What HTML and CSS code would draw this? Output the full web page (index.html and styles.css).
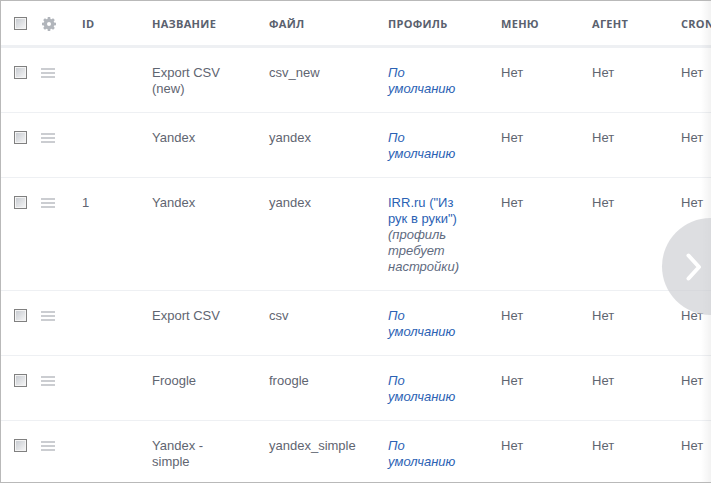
FILE: index.html
```html
<!DOCTYPE html>
<html lang="ru">
<head>
<meta charset="utf-8">
<title>Экспорт</title>
<link rel="stylesheet" href="styles.css">
</head>
<body>
<div class="frame">
<table class="grid">
<colgroup>
<col class="c-check"><col class="c-handle"><col class="c-id"><col class="c-name"><col class="c-file"><col class="c-profile"><col class="c-menu"><col class="c-agent"><col class="c-cron">
</colgroup>
<thead>
<tr>
<th><span class="check"></span></th>
<th><svg class="gear" viewBox="0 0 14 14" width="14" height="14"><path fill-rule="evenodd" d="M5.800 0h2.400l.3 1.900 1 .4L11.100 1.200l1.700 1.700-1.100 1.600.4 1L14 5.800v2.400l-1.900.3-.4 1 1.100 1.600-1.700 1.700-1.600-1.100-1 .4-.3 1.900H5.800l-.3-1.900-1-.4-1.600 1.100-1.700-1.700 1.100-1.600-.4-1L0 8.200V5.800l1.900-.3.4-1L1.200 2.900l1.700-1.700 1.600 1.100 1-.4zM7 5a2 2 0 1 0 0 4 2 2 0 0 0 0-4z"/></svg></th>
<th>ID</th><th>Название</th><th>Файл</th><th>Профиль</th><th>Меню</th><th>Агент</th><th>Cron</th>
</tr>
</thead>
<tbody>
<tr>
<td><span class="check"></span></td><td><span class="handle"></span></td><td></td>
<td class="wrap">Export CSV (new)</td><td>csv_new</td>
<td class="profile"><a class="link"><em>По умолчанию</em></a></td><td>Нет</td><td>Нет</td><td>Нет</td>
</tr>
<tr>
<td><span class="check"></span></td><td><span class="handle"></span></td><td></td>
<td class="wrap">Yandex</td><td>yandex</td>
<td class="profile"><a class="link"><em>По умолчанию</em></a></td><td>Нет</td><td>Нет</td><td>Нет</td>
</tr>
<tr>
<td><span class="check"></span></td><td><span class="handle"></span></td><td>1</td>
<td class="wrap">Yandex</td><td>yandex</td>
<td class="profile"><a class="link">IRR.ru ("Из рук в руки")</a> <em class="note">(профиль требует настройки)</em></td><td>Нет</td><td>Нет</td><td>Нет</td>
</tr>
<tr>
<td><span class="check"></span></td><td><span class="handle"></span></td><td></td>
<td class="wrap">Export CSV</td><td>csv</td>
<td class="profile"><a class="link"><em>По умолчанию</em></a></td><td>Нет</td><td>Нет</td><td>Нет</td>
</tr>
<tr>
<td><span class="check"></span></td><td><span class="handle"></span></td><td></td>
<td class="wrap">Froogle</td><td>froogle</td>
<td class="profile"><a class="link"><em>По умолчанию</em></a></td><td>Нет</td><td>Нет</td><td>Нет</td>
</tr>
<tr>
<td><span class="check"></span></td><td><span class="handle"></span></td><td></td>
<td class="wrap">Yandex - simple</td><td>yandex_simple</td>
<td class="profile"><a class="link"><em>По умолчанию</em></a></td><td>Нет</td><td>Нет</td><td>Нет</td>
</tr>
</tbody>
</table>
<div class="fade"></div>
<div class="next"><svg viewBox="0 0 16 28" width="16" height="28"><path d="M2.500 2.500 13 14 2.500 25.500" fill="none" stroke="#fff" stroke-width="4" stroke-linecap="round" stroke-linejoin="round"/></svg></div>
</div>
</body>
</html>
```
FILE: styles.css
```css
html, body {
  margin: 0;
  padding: 0;
  background: #fff;
}
.frame {
  position: relative;
  box-sizing: border-box;
  width: 711px;
  height: 483px;
  overflow: hidden;
  border: 1px solid #b9b9b9;
  border-right: 0;
  background: #fff;
}
.grid {
  table-layout: fixed;
  width: 730px;
  border-collapse: separate;
  border-spacing: 0;
  font: 13px/16px "Liberation Sans", Arial, sans-serif;
  color: #5f6571;
}
.c-check { width: 40px; }
.c-handle { width: 41px; }
.c-id { width: 70px; }
.c-name { width: 117px; }
.c-file { width: 119px; }
.c-profile { width: 113px; }
.c-menu { width: 91px; }
.c-agent { width: 89px; }
.c-cron { width: 50px; }
.grid th {
  box-sizing: border-box;
  height: 47px;
  padding: 1px 0 0;
  border-bottom: 3px solid #eef0f3;
  text-align: left;
  vertical-align: middle;
  font: 700 11px/16px "Open Sans", sans-serif;
  letter-spacing: .3px;
  text-transform: uppercase;
  color: #5a616e;
}
.grid td {
  padding: 17px 0 15px;
  border-bottom: 1px solid #eef0f3;
  vertical-align: top;
}
.grid tr > :first-child { padding-left: 13px; }
.grid td.wrap { padding-right: 30px; }
.grid td.profile { padding-right: 38px; }
.link { color: #2b62b4; }
.note { color: #5f6b80; }
.check {
  display: block;
  box-sizing: border-box;
  width: 13px;
  height: 13px;
  border: 1px solid #808080;
  box-shadow: inset 0 0 0 1px #f4f4f4;
  background: linear-gradient(135deg, #c4c8ce, #f8f8f8);
}
.grid td .check { margin-top: 1px; }
.handle {
  display: block;
  width: 14px;
  height: 10px;
  margin-top: 3px;
  background: repeating-linear-gradient(#cbcdd1 0 2px, transparent 2px 4px);
}
.gear {
  display: block;
  margin-left: 1px;
  fill: #b1b5bb;
}
.fade {
  position: absolute;
  top: 0;
  right: 0;
  bottom: 0;
  width: 10px;
  background: linear-gradient(90deg, rgba(0, 0, 0, 0), rgba(0, 0, 0, .05));
}
.next {
  position: absolute;
  top: 217px;
  left: 661px;
  width: 97px;
  height: 97px;
  border-radius: 50%;
  background: rgba(205, 207, 211, .68);
  display: flex;
  align-items: center;
  padding-left: 24px;
  box-sizing: border-box;
}
```
